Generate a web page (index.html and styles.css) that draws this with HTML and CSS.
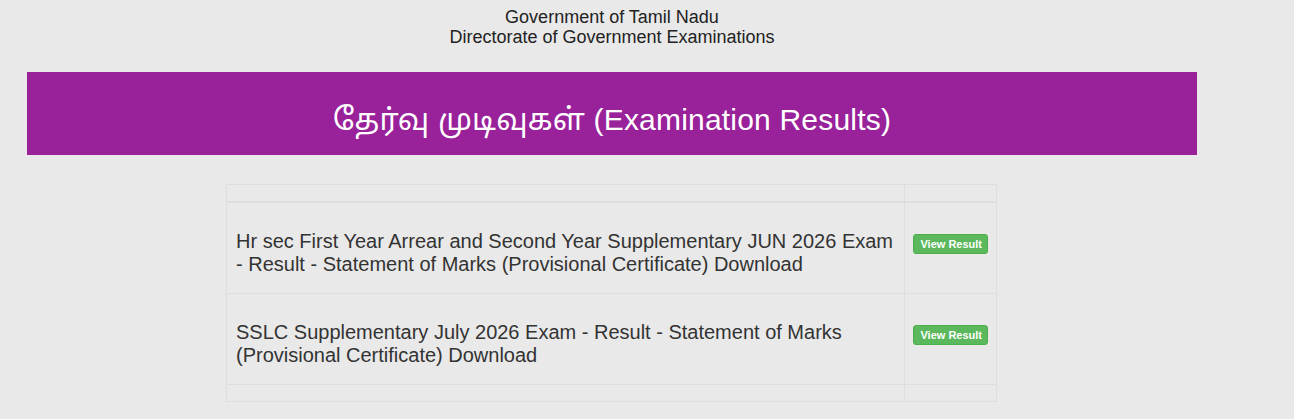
FILE: index.html
```html
<!DOCTYPE html>
<html lang="en">
<head>
<meta charset="utf-8">
<title>Examination Results</title>
<link rel="stylesheet" href="styles.css">
</head>
<body>
<div class="page">
  <header class="top">
    <div>Government of Tamil Nadu</div>
    <div>Directorate of Government Examinations</div>
  </header>
  <div class="banner">
    <h1>தேர்வு முடிவுகள் (Examination Results)</h1>
  </div>
  <table class="results">
    <thead>
      <tr><th></th><th class="act"></th></tr>
    </thead>
    <tbody>
      <tr>
        <td class="desc">Hr sec First Year Arrear and Second Year Supplementary JUN 2026 Exam - Result - Statement of Marks (Provisional Certificate) Download</td>
        <td class="act"><a class="btn" href="#">View Result</a></td>
      </tr>
      <tr>
        <td class="desc">SSLC Supplementary July 2026 Exam - Result - Statement of Marks (Provisional Certificate) Download</td>
        <td class="act"><a class="btn" href="#">View Result</a></td>
      </tr>
      <tr class="empty"><td></td><td class="act"></td></tr>
    </tbody>
  </table>
</div>
</body>
</html>
```

FILE: styles.css
```css
html, body {
  margin: 0;
  padding: 0;
  background: #e9e9e9;
}
body {
  font-family: "Liberation Sans", Arial, "Noto Sans Tamil", "Noto Sans", sans-serif;
  color: #333;
}
.page {
  width: 1224px;
}
.top {
  text-align: center;
  font-size: 18px;
  line-height: 20px;
  color: #222;
  padding-top: 7px;
  margin-left: 27px;
  width: 1170px;
}
.banner {
  margin: 25px 0 0 27px;
  width: 1170px;
  background: #99219a;
  color: #fff;
  text-align: center;
}
.banner h1 {
  margin: 0;
  font-weight: normal;
  font-size: 30px;
  line-height: 33px;
  padding: 31px 0 19px;
  letter-spacing: 0.2px;
}
.results {
  margin: 29px 0 0 226px;
  width: 771px;
  border-collapse: collapse;
  border: 1px solid #dedede;
}
.results th,
.results td {
  border: 1px solid #dedede;
  padding: 8px;
  text-align: left;
  vertical-align: top;
}
.results thead th {
  border-bottom-width: 2px;
  height: 0;
}
.results td.desc {
  font-size: 20px;
  line-height: 23px;
  padding: 27px 10px 17px 9px;
}
.results .act {
  width: 1%;
  white-space: nowrap;
}
.results td.act {
  padding-top: 31px;
}
.results tr.empty td {
  padding: 8px;
}
.btn {
  display: inline-block;
  background: #5cb85c;
  border: 1px solid #4cae4c;
  border-radius: 3px;
  color: #fff;
  text-decoration: none;
  font-size: 11px;
  font-weight: bold;
  line-height: 18px;
  padding: 0 5px 0 6px;
}
```
